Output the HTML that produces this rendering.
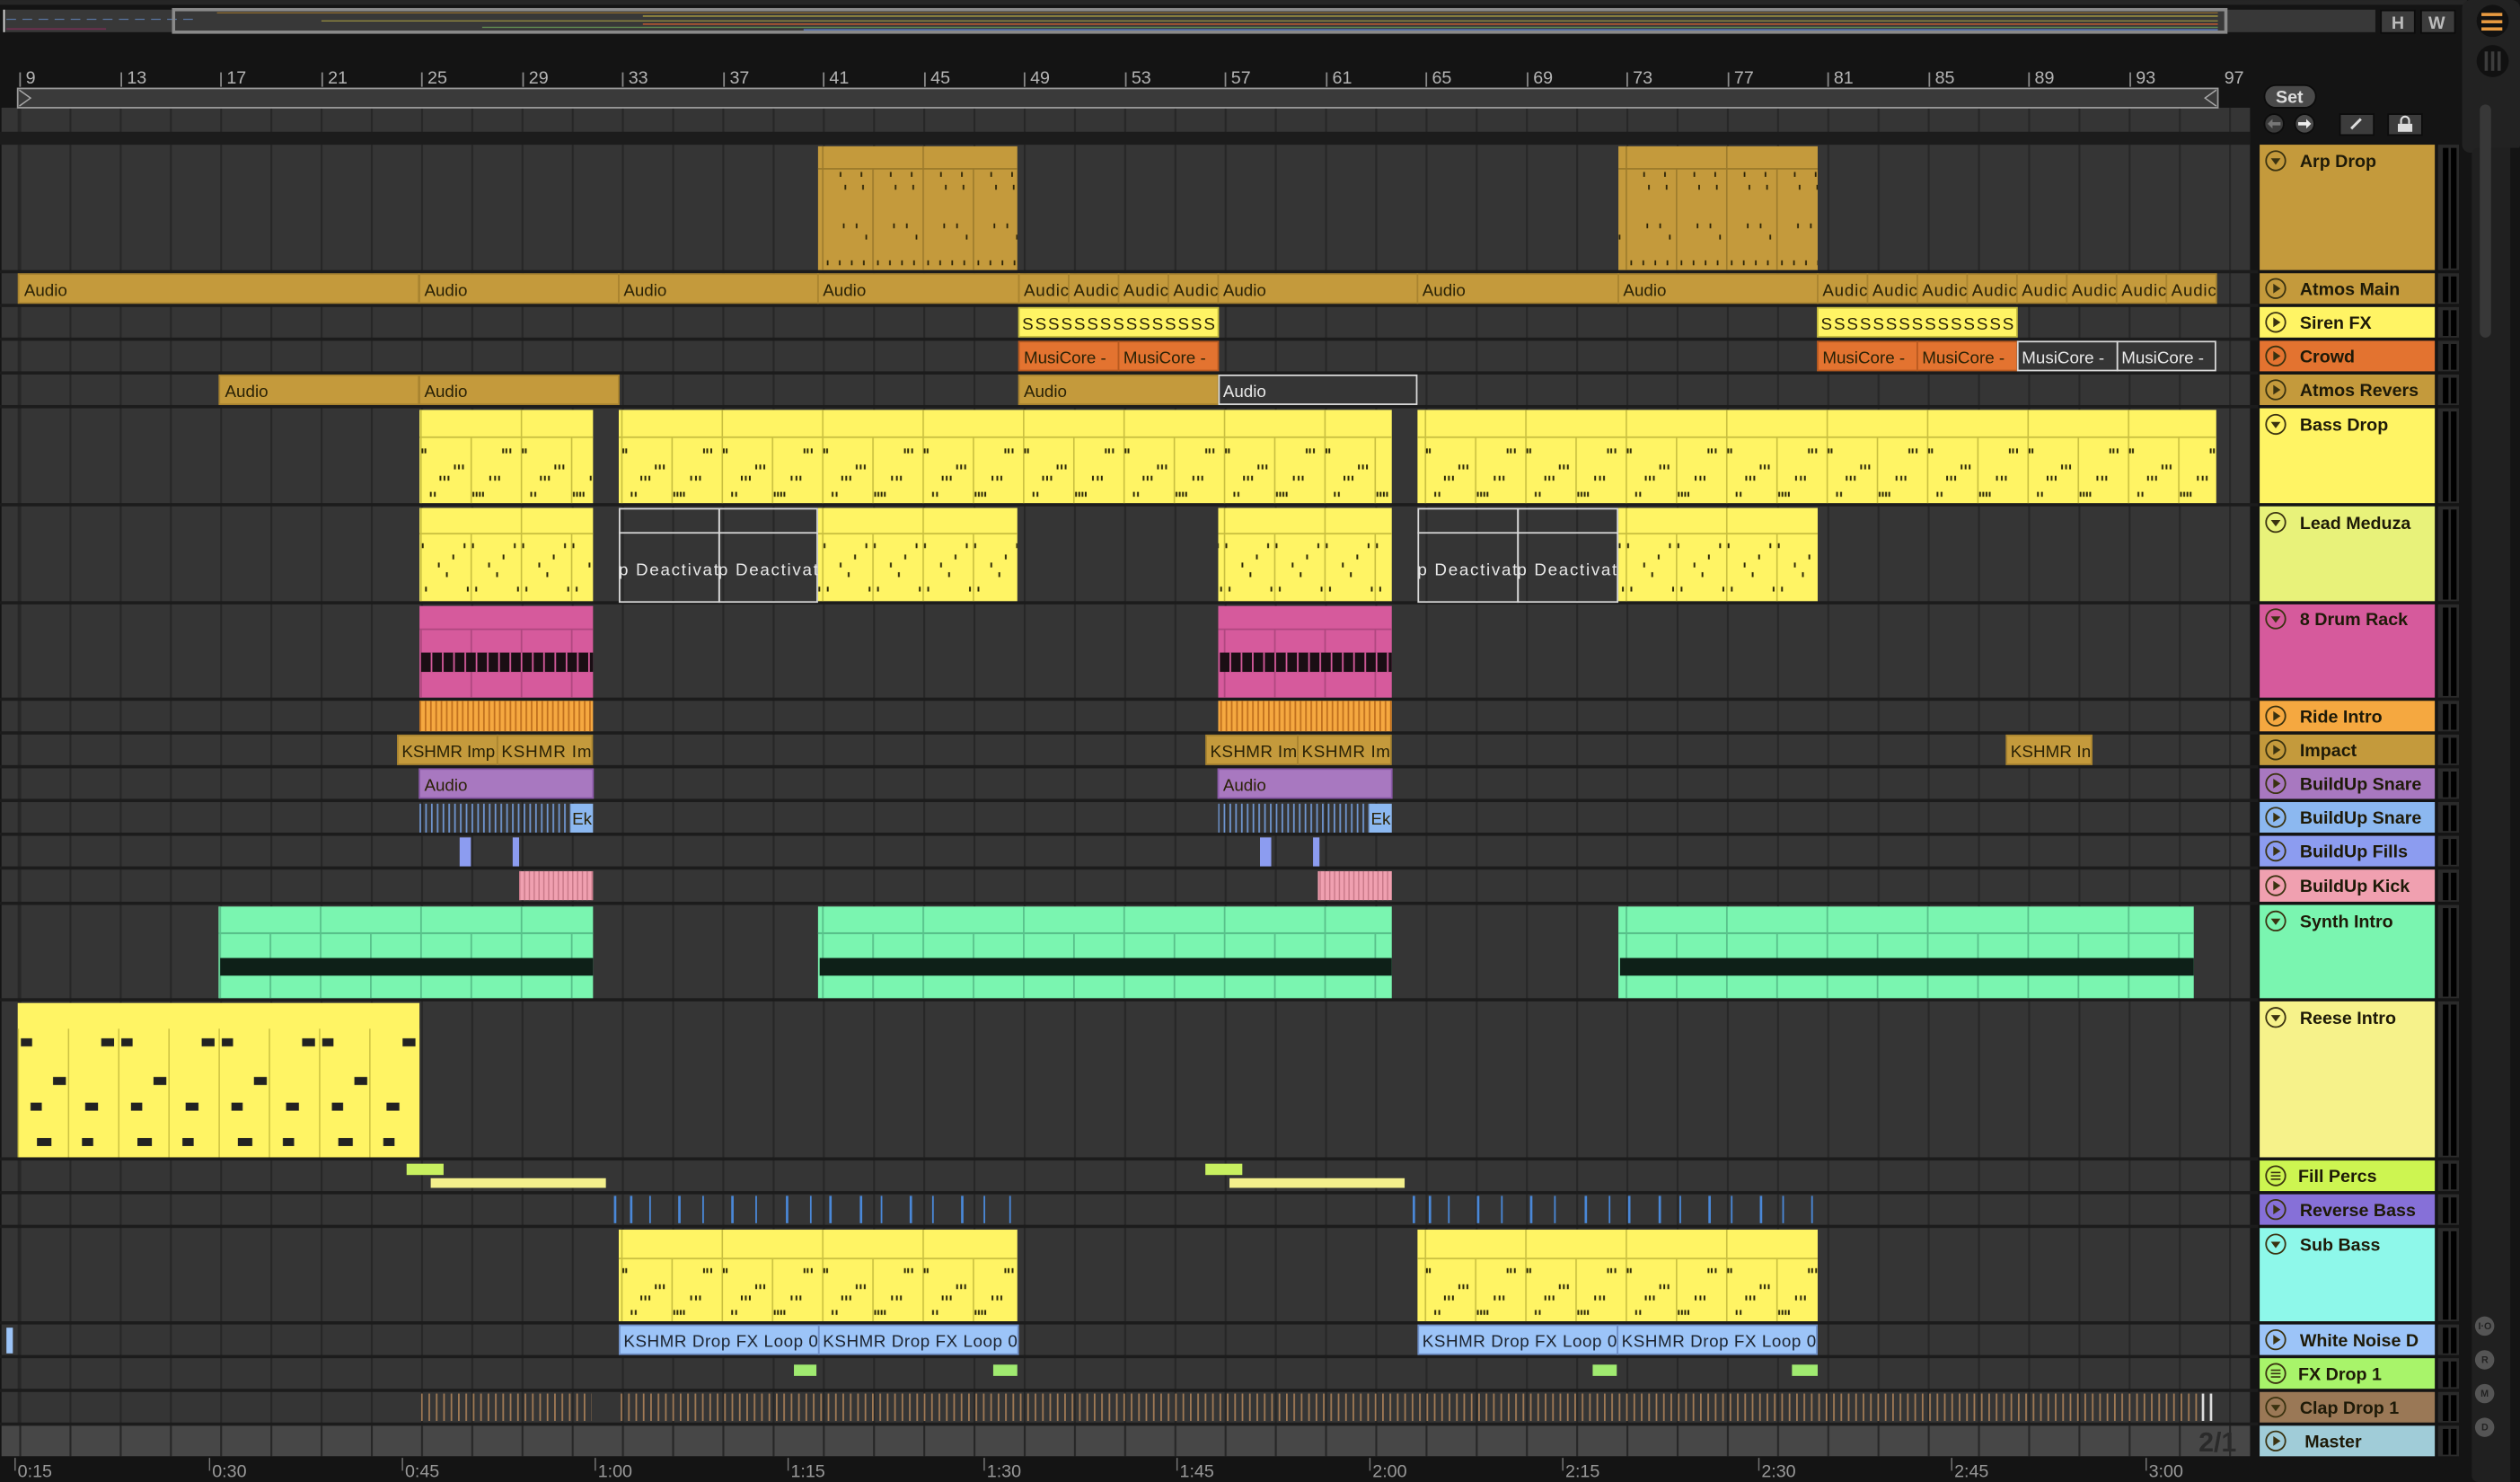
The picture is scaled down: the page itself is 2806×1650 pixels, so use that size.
<!DOCTYPE html>
<html><head><meta charset="utf-8"><style>
html,body{margin:0;padding:0;background:#141414;overflow:hidden}
svg{display:block}
text{font-family:"Liberation Sans",sans-serif}
.h{font-weight:bold;font-size:11px;fill:#1e1a08}
.c{font-size:10.5px;fill:#2a2206}
.r{font-size:10.5px;fill:#b4b4b4}
.w{font-size:10.5px;fill:#e8e8e8}
</style></head><body>
<svg width="2806" height="1650" viewBox="0 0 1568 922" xmlns="http://www.w3.org/2000/svg">
<defs>
<pattern id="grid" patternUnits="userSpaceOnUse" x="12" y="0" width="31.25" height="20"><rect width="1.2" height="20" fill="#272727"/></pattern>
<pattern id="nb" patternUnits="userSpaceOnUse" x="11.5" y="272" width="62.5" height="41">
<rect x="0" width="0.9" height="41" fill="#c9bf40"/><rect x="31.25" width="0.9" height="41" fill="#c9bf40"/>
<g fill="#2a2606">
<rect x="0.8" y="7" width="1.1" height="3"/><rect x="2.6" y="7" width="1.1" height="3"/>
<rect x="51" y="7" width="1.1" height="3"/><rect x="53" y="7" width="1.1" height="3"/><rect x="55.5" y="7" width="1.1" height="3"/>
<rect x="21" y="17" width="1.1" height="3"/><rect x="23.5" y="17" width="1.1" height="3"/><rect x="26" y="17" width="1.1" height="3"/>
<rect x="12" y="24" width="1.1" height="3"/><rect x="14.5" y="24" width="1.1" height="3"/><rect x="17" y="24" width="1.1" height="3"/>
<rect x="43" y="24" width="1.1" height="3"/><rect x="46" y="24" width="1.1" height="3"/><rect x="48.5" y="24" width="1.1" height="3"/>
<rect x="6" y="34" width="1.1" height="3"/><rect x="8.5" y="34" width="1.1" height="3"/>
<rect x="32.5" y="34" width="1.1" height="3"/><rect x="34.5" y="34" width="1.1" height="3"/><rect x="36.5" y="34" width="1.1" height="3"/><rect x="38.5" y="34" width="1.1" height="3"/>
</g></pattern>
<pattern id="ns" patternUnits="userSpaceOnUse" x="11.5" y="783" width="62.5" height="39">
<rect x="0" width="0.9" height="39" fill="#c9bf40"/><rect x="31.25" width="0.9" height="39" fill="#c9bf40"/>
<g fill="#2a2606">
<rect x="0.8" y="6" width="1.1" height="3"/><rect x="2.6" y="6" width="1.1" height="3"/>
<rect x="51" y="6" width="1.1" height="3"/><rect x="53" y="6" width="1.1" height="3"/><rect x="55.5" y="6" width="1.1" height="3"/>
<rect x="21" y="16" width="1.1" height="3"/><rect x="23.5" y="16" width="1.1" height="3"/><rect x="26" y="16" width="1.1" height="3"/>
<rect x="12" y="23" width="1.1" height="3"/><rect x="14.5" y="23" width="1.1" height="3"/><rect x="17" y="23" width="1.1" height="3"/>
<rect x="43" y="23" width="1.1" height="3"/><rect x="46" y="23" width="1.1" height="3"/><rect x="48.5" y="23" width="1.1" height="3"/>
<rect x="6" y="32" width="1.1" height="3"/><rect x="8.5" y="32" width="1.1" height="3"/>
<rect x="32.5" y="32" width="1.1" height="3"/><rect x="34.5" y="32" width="1.1" height="3"/><rect x="36.5" y="32" width="1.1" height="3"/><rect x="38.5" y="32" width="1.1" height="3"/>
</g></pattern>
<pattern id="nl" patternUnits="userSpaceOnUse" x="11.5" y="332" width="31.25" height="42">
<rect x="0" width="0.9" height="42" fill="#c9bf40"/>
<g fill="#2a2606"><rect x="1" y="6" width="1.1" height="3"/><rect x="11" y="18" width="1.1" height="3"/><rect x="3" y="33" width="1.1" height="3"/><rect x="16" y="24" width="1.1" height="3"/><rect x="27" y="6" width="1.1" height="3"/><rect x="29" y="33" width="1.1" height="3"/><rect x="20" y="13" width="1.1" height="3"/></g></pattern>
<pattern id="na" patternUnits="userSpaceOnUse" x="11.5" y="105" width="31.25" height="63">
<rect x="0" width="0.9" height="63" fill="#9c7a2c"/>
<g fill="#2a2206"><rect x="11" y="2" width="1" height="3"/><rect x="24" y="2" width="1" height="3"/><rect x="14" y="10" width="1" height="3"/>
<rect x="25" y="10" width="1" height="3"/><rect x="13" y="34" width="1" height="3"/><rect x="21" y="34" width="1" height="3"/><rect x="27" y="41" width="1" height="3"/>
<rect x="3" y="57" width="1" height="3"/><rect x="10.5" y="57" width="1" height="3"/><rect x="18" y="57" width="1" height="3"/><rect x="25.5" y="57" width="1" height="3"/></g></pattern>
<pattern id="nr" patternUnits="userSpaceOnUse" x="11" y="640" width="62.5" height="80">
<rect x="0" width="0.8" height="80" fill="#c9bf40"/><rect x="31.25" width="0.8" height="80" fill="#c9bf40"/>
<rect x="2" y="6" width="7" height="5" fill="#222"/><rect x="52" y="6" width="8" height="5" fill="#222"/>
<rect x="22" y="30" width="8" height="5" fill="#222"/><rect x="42" y="46" width="8" height="5" fill="#222"/>
<rect x="8" y="46" width="7" height="5" fill="#222"/><rect x="12" y="68" width="9" height="5" fill="#222"/><rect x="40" y="68" width="7" height="5" fill="#222"/></pattern>
<pattern id="hdY" patternUnits="userSpaceOnUse" x="11.5" y="0" width="62.5" height="10"><rect width="0.9" height="10" fill="#c9bf40"/></pattern>
<pattern id="hdA" patternUnits="userSpaceOnUse" x="11.5" y="0" width="62.5" height="10"><rect width="0.9" height="10" fill="#9c7a2c"/></pattern>
<pattern id="hdG" patternUnits="userSpaceOnUse" x="11.5" y="0" width="62.5" height="10"><rect width="1" height="10" fill="#58c08a"/></pattern>
<pattern id="cG" patternUnits="userSpaceOnUse" x="11.5" y="0" width="31.25" height="10"><rect width="1" height="10" fill="#58c08a"/></pattern>
<pattern id="ride" patternUnits="userSpaceOnUse" x="261" y="0" width="3.3" height="10"><rect width="1" height="10" fill="#c0701e"/></pattern>
<pattern id="clap" patternUnits="userSpaceOnUse" x="262" y="0" width="4.6" height="10"><rect width="1" height="10" fill="#a07a55"/></pattern>
<pattern id="snb" patternUnits="userSpaceOnUse" x="261" y="0" width="3.6" height="10"><rect width="1" height="10" fill="#6f95cf"/></pattern>
<pattern id="kick" patternUnits="userSpaceOnUse" x="323" y="0" width="3" height="10"><rect width="0.8" height="10" fill="#c87888"/></pattern>
<pattern id="drum" patternUnits="userSpaceOnUse" x="261" y="0" width="7" height="10"><rect width="1" height="10" fill="#d65a9c"/></pattern>
<pattern id="cP" patternUnits="userSpaceOnUse" x="11.5" y="0" width="31.25" height="10"><rect width="1" height="10" fill="#b04880"/></pattern>
</defs>

<!-- top bar -->
<rect x="0" y="0" width="1568" height="922" fill="#141414"/>
<rect x="0" y="0" width="1535" height="3" fill="#262626"/>
<rect x="2" y="6" width="1476" height="14" fill="#383838"/>
<rect x="2" y="6" width="1" height="14" fill="#ddd"/>
<line x1="4" y1="12" x2="120" y2="12" stroke="#5874a0" stroke-width="0.7" stroke-dasharray="6 4"/>
<line x1="4" y1="18" x2="66" y2="18" stroke="#703050" stroke-width="1"/>
<rect x="108" y="6" width="1277" height="14" fill="none" stroke="#8a8a8a" stroke-width="2"/>
<line x1="135" y1="8" x2="1380" y2="8" stroke="#8a6a30" stroke-width="0.8"/>
<line x1="400" y1="10" x2="1380" y2="10" stroke="#b0a040" stroke-width="0.8"/>
<line x1="200" y1="13" x2="1380" y2="13" stroke="#9a9040" stroke-width="0.7"/>
<line x1="400" y1="15" x2="1380" y2="15" stroke="#c05a30" stroke-width="0.8"/>
<line x1="300" y1="17" x2="1380" y2="17" stroke="#5f8a50" stroke-width="0.8"/>
<line x1="500" y1="18.5" x2="1380" y2="18.5" stroke="#5c7cc0" stroke-width="0.8"/>
<rect x="1481" y="6" width="22" height="15" fill="#0c0c0c"/><rect x="1482" y="7" width="20" height="13" fill="#3c3c3c"/>
<text x="1488" y="18" style="font-size:11px;fill:#bbb;font-weight:bold">H</text>
<rect x="1506" y="6" width="22" height="15" fill="#0c0c0c"/><rect x="1507" y="7" width="20" height="13" fill="#3c3c3c"/>
<text x="1511" y="18" style="font-size:11px;fill:#bbb;font-weight:bold">W</text>
<!-- right column -->
<rect x="1532" y="0" width="36" height="95" rx="5" fill="#222"/>
<rect x="1538" y="92" width="28" height="830" rx="4" fill="#202020"/>
<rect x="1562" y="92" width="6" height="830" fill="#141414"/>
<circle cx="1551" cy="13" r="10" fill="#111"/>
<rect x="1544" y="8" width="13" height="2" fill="#e89a40"/><rect x="1544" y="12.5" width="13" height="2" fill="#e89a40"/><rect x="1544" y="17" width="13" height="2" fill="#e89a40"/>
<circle cx="1551" cy="38" r="10" fill="#111"/>
<rect x="1546" y="32" width="2" height="12" fill="#3c3c3c"/><rect x="1550" y="32" width="2" height="12" fill="#3c3c3c"/><rect x="1554" y="32" width="2" height="12" fill="#3c3c3c"/>
<rect x="1543" y="65" width="7" height="145" rx="3.5" fill="#383838"/>
<g style="font-size:6px;fill:#222;font-weight:bold">
<circle cx="1546" cy="825" r="6" fill="#555"/><text x="1542" y="827">I·O</text>
<circle cx="1546" cy="846" r="6" fill="#555"/><text x="1544" y="848">R</text>
<circle cx="1546" cy="867" r="6" fill="#555"/><text x="1543.5" y="869">M</text>
<circle cx="1546" cy="888" r="6" fill="#555"/><text x="1544" y="890">D</text>
</g>

<!-- ruler -->
<g class="r" style="font-size:11px">
<text x="16" y="52">9</text><text x="79" y="52">13</text><text x="141" y="52">17</text><text x="204" y="52">21</text><text x="266" y="52">25</text><text x="329" y="52">29</text><text x="391" y="52">33</text><text x="454" y="52">37</text><text x="516" y="52">41</text><text x="579" y="52">45</text><text x="641" y="52">49</text><text x="704" y="52">53</text><text x="766" y="52">57</text><text x="829" y="52">61</text><text x="891" y="52">65</text><text x="954" y="52">69</text><text x="1016" y="52">73</text><text x="1079" y="52">77</text><text x="1141" y="52">81</text><text x="1204" y="52">85</text><text x="1266" y="52">89</text><text x="1329" y="52">93</text><text x="1384" y="52">97</text>
</g>
<g fill="#888">
<rect x="12" y="45" width="1" height="9"/><rect x="75" y="45" width="1" height="9"/><rect x="137" y="45" width="1" height="9"/><rect x="200" y="45" width="1" height="9"/><rect x="262" y="45" width="1" height="9"/><rect x="325" y="45" width="1" height="9"/><rect x="387" y="45" width="1" height="9"/><rect x="450" y="45" width="1" height="9"/><rect x="512" y="45" width="1" height="9"/><rect x="575" y="45" width="1" height="9"/><rect x="637" y="45" width="1" height="9"/><rect x="700" y="45" width="1" height="9"/><rect x="762" y="45" width="1" height="9"/><rect x="825" y="45" width="1" height="9"/><rect x="887" y="45" width="1" height="9"/><rect x="950" y="45" width="1" height="9"/><rect x="1012" y="45" width="1" height="9"/><rect x="1075" y="45" width="1" height="9"/><rect x="1137" y="45" width="1" height="9"/><rect x="1200" y="45" width="1" height="9"/><rect x="1262" y="45" width="1" height="9"/><rect x="1325" y="45" width="1" height="9"/>
</g>
<!-- Set controls -->
<rect x="1409" y="53" width="32" height="14" rx="7" fill="#4a4a4a" stroke="#0c0c0c"/>
<text x="1416" y="64" style="font-size:11px;fill:#ddd;font-weight:bold">Set</text>
<circle cx="1415" cy="77" r="6" fill="#3a3a3a" stroke="#0c0c0c"/><path d="M1411,77 L1414,74 L1414,76 L1419,76 L1419,78 L1414,78 L1414,80Z" fill="#777"/>
<circle cx="1434" cy="77" r="6" fill="#4a4a4a" stroke="#0c0c0c"/><path d="M1438,77 L1435,74 L1435,76 L1430,76 L1430,78 L1435,78 L1435,80Z" fill="#eee"/>
<rect x="1456" y="71" width="21" height="13" fill="#3c3c3c" stroke="#0c0c0c"/><line x1="1463" y1="80" x2="1469" y2="74" stroke="#ddd" stroke-width="1.6"/>
<rect x="1486" y="71" width="21" height="13" fill="#3c3c3c" stroke="#0c0c0c"/><rect x="1492" y="77" width="9" height="5" fill="#ddd"/><path d="M1494,77 V75 a2.5,2.5 0 0 1 5,0 V77" fill="none" stroke="#ddd" stroke-width="1.2"/>

<!-- arrangement background -->
<rect x="1" y="67" width="1399" height="839" fill="#353535"/>
<rect x="1" y="67" width="1399" height="839" fill="url(#grid)"/>
<rect x="1" y="67" width="10" height="839" fill="#353535"/>
<rect x="11" y="67" width="1" height="839" fill="#272727"/>
<rect x="11" y="55" width="1369" height="12" fill="#3a3a3a" stroke="#9a9a9a" stroke-width="1"/>
<path d="M12,56 L19,61 L12,66" fill="none" stroke="#aaa" stroke-width="0.8"/>
<path d="M1379,56 L1372,61 L1379,66" fill="none" stroke="#aaa" stroke-width="0.8"/>
<rect x="0" y="82" width="1400" height="8" fill="#1c1c1c"/>
<rect x="1" y="887" width="1399" height="19" fill="#474747"/>
<rect x="1" y="887" width="1399" height="19" fill="url(#grid)"/>
<g fill="#1c1c1c">
<rect x="0" y="168" width="1405" height="2"/><rect x="0" y="189" width="1405" height="2"/><rect x="0" y="210" width="1405" height="2"/><rect x="0" y="231" width="1405" height="2"/><rect x="0" y="252" width="1405" height="2"/><rect x="0" y="313" width="1405" height="2"/><rect x="0" y="374" width="1405" height="2"/><rect x="0" y="434" width="1405" height="2"/><rect x="0" y="455" width="1405" height="2"/><rect x="0" y="476" width="1405" height="2"/><rect x="0" y="497" width="1405" height="2"/><rect x="0" y="518" width="1405" height="2"/><rect x="0" y="539" width="1405" height="2"/><rect x="0" y="561" width="1405" height="2"/><rect x="0" y="621" width="1405" height="2"/><rect x="0" y="720" width="1405" height="2"/><rect x="0" y="741" width="1405" height="2"/><rect x="0" y="762" width="1405" height="2"/><rect x="0" y="822" width="1405" height="2"/><rect x="0" y="843" width="1405" height="2"/><rect x="0" y="864" width="1405" height="2"/><rect x="0" y="885" width="1405" height="2"/>
</g>
<text x="1368" y="903" style="font-size:17px;fill:#2a2a2a;font-weight:bold">2/1</text>

<!-- Arp Drop -->
<rect x="509" y="91" width="124" height="77" fill="#c49a3c"/><rect x="509" y="91" width="124" height="14" fill="url(#hdA)"/><rect x="509" y="105" width="124" height="63" fill="url(#na)"/><rect x="509" y="104.5" width="124" height="1" fill="#9c7a2c"/>
<rect x="1007" y="91" width="124" height="77" fill="#c49a3c"/><rect x="1007" y="91" width="124" height="14" fill="url(#hdA)"/><rect x="1007" y="105" width="124" height="63" fill="url(#na)"/><rect x="1007" y="104.5" width="124" height="1" fill="#9c7a2c"/>
<!-- Atmos Main -->
<g stroke="#a98430" stroke-width="1" fill="#c49a3c">
<rect x="11.5" y="170.5" width="249" height="18"/><rect x="261" y="170.5" width="124" height="18"/><rect x="385" y="170.5" width="124" height="18"/><rect x="509" y="170.5" width="125" height="18"/>
<rect x="634" y="170.5" width="31" height="18"/><rect x="665" y="170.5" width="31" height="18"/><rect x="696" y="170.5" width="31" height="18"/><rect x="727" y="170.5" width="31" height="18"/>
<rect x="758" y="170.5" width="124" height="18"/><rect x="882" y="170.5" width="125" height="18"/><rect x="1007" y="170.5" width="124" height="18"/>
<rect x="1131" y="170.5" width="31" height="18"/><rect x="1162" y="170.5" width="31" height="18"/><rect x="1193" y="170.5" width="31" height="18"/><rect x="1224" y="170.5" width="31" height="18"/><rect x="1255" y="170.5" width="31" height="18"/><rect x="1286" y="170.5" width="31" height="18"/><rect x="1317" y="170.5" width="31" height="18"/><rect x="1348" y="170.5" width="31" height="18"/>
</g>
<g class="c">
<text x="15" y="184">Audio</text><text x="264" y="184">Audio</text><text x="388" y="184">Audio</text><text x="512" y="184">Audio</text>
<text x="637" y="184" textLength="28">Audic</text><text x="668" y="184" textLength="28">Audic</text><text x="699" y="184" textLength="28">Audic</text><text x="730" y="184" textLength="28">Audic</text>
<text x="761" y="184">Audio</text><text x="885" y="184">Audio</text><text x="1010" y="184">Audio</text>
<text x="1134" y="184" textLength="28">Audic</text><text x="1165" y="184" textLength="28">Audic</text><text x="1196" y="184" textLength="28">Audic</text><text x="1227" y="184" textLength="28">Audic</text><text x="1258" y="184" textLength="28">Audic</text><text x="1289" y="184" textLength="28">Audic</text><text x="1320" y="184" textLength="28">Audic</text><text x="1351" y="184" textLength="28">Audic</text>
</g>
<!-- Siren FX -->
<rect x="634" y="191.5" width="124" height="18" fill="#fff464" stroke="#c9bf40"/>
<rect x="1131" y="191.5" width="124" height="18" fill="#fff464" stroke="#c9bf40"/>
<text x="636" y="205" class="c" textLength="120">SSSSSSSSSSSSSSS</text>
<text x="1133" y="205" class="c" textLength="120">SSSSSSSSSSSSSSS</text>
<!-- Crowd -->
<g fill="#e37330" stroke="#b85a20"><rect x="634" y="212.5" width="62" height="18"/><rect x="696" y="212.5" width="62" height="18"/><rect x="1131" y="212.5" width="62" height="18"/><rect x="1193" y="212.5" width="62" height="18"/></g>
<g fill="#353535" stroke="#d8d8d8"><rect x="1255.5" y="212.5" width="62" height="18"/><rect x="1317.5" y="212.5" width="61" height="18"/></g>
<g class="c"><text x="637" y="226">MusiCore -</text><text x="699" y="226">MusiCore -</text><text x="1134" y="226">MusiCore -</text><text x="1196" y="226">MusiCore -</text></g>
<g class="w"><text x="1258" y="226">MusiCore -</text><text x="1320" y="226">MusiCore -</text></g>
<!-- Atmos Revers -->
<g fill="#c49a3c" stroke="#a98430"><rect x="136.5" y="233.5" width="124" height="18"/><rect x="261" y="233.5" width="124" height="18"/><rect x="634" y="233.5" width="124" height="18"/></g>
<rect x="758.5" y="233.5" width="123" height="18" fill="#353535" stroke="#d8d8d8"/>
<g class="c"><text x="140" y="247">Audio</text><text x="264" y="247">Audio</text><text x="637" y="247">Audio</text></g>
<text x="761" y="247" class="w">Audio</text>
<!-- Bass Drop -->
<g fill="#fff464">
<rect x="261" y="255" width="108" height="58"/><rect x="385" y="255" width="481" height="58"/><rect x="882" y="255" width="497" height="58"/></g>
<rect x="261" y="255" width="108" height="17" fill="url(#hdY)"/><rect x="385" y="255" width="481" height="17" fill="url(#hdY)"/><rect x="882" y="255" width="497" height="17" fill="url(#hdY)"/>
<rect x="261" y="272" width="108" height="41" fill="url(#nb)"/><rect x="385" y="272" width="481" height="41" fill="url(#nb)"/><rect x="882" y="272" width="497" height="41" fill="url(#nb)"/>
<g fill="#c9bf40"><rect x="261" y="271.5" width="108" height="1"/><rect x="385" y="271.5" width="481" height="1"/><rect x="882" y="271.5" width="497" height="1"/></g>
<!-- Lead Meduza -->
<g fill="#fff464"><rect x="261" y="316" width="108" height="58"/><rect x="509" y="316" width="124" height="58"/><rect x="758" y="316" width="108" height="58"/><rect x="1007" y="316" width="124" height="58"/></g>
<rect x="261" y="316" width="108" height="16" fill="url(#hdY)"/><rect x="509" y="316" width="124" height="16" fill="url(#hdY)"/><rect x="758" y="316" width="108" height="16" fill="url(#hdY)"/><rect x="1007" y="316" width="124" height="16" fill="url(#hdY)"/>
<rect x="261" y="332" width="108" height="42" fill="url(#nl)"/><rect x="509" y="332" width="124" height="42" fill="url(#nl)"/><rect x="758" y="332" width="108" height="42" fill="url(#nl)"/><rect x="1007" y="332" width="124" height="42" fill="url(#nl)"/>
<g fill="#c9bf40"><rect x="261" y="331.5" width="108" height="1"/><rect x="509" y="331.5" width="124" height="1"/><rect x="758" y="331.5" width="108" height="1"/><rect x="1007" y="331.5" width="124" height="1"/></g>
<g fill="none" stroke="#d8d8d8"><rect x="385.5" y="316.5" width="62" height="58"/><rect x="447.5" y="316.5" width="61" height="58"/><line x1="385" y1="331.5" x2="509" y2="331.5"/>
<rect x="882.5" y="316.5" width="62" height="58"/><rect x="944.5" y="316.5" width="62" height="58"/><line x1="882" y1="331.5" x2="1007" y2="331.5"/></g>
<g class="w"><text x="385" y="358" textLength="62">p Deactivat</text><text x="447" y="358" textLength="62">p Deactivat</text><text x="882" y="358" textLength="62">p Deactivat</text><text x="944" y="358" textLength="62">p Deactivat</text></g>
<!-- 8 Drum Rack -->
<rect x="261" y="377" width="108" height="57" fill="#d65a9c"/><rect x="758" y="377" width="108" height="57" fill="#d65a9c"/>
<rect x="261" y="392" width="108" height="42" fill="url(#cP)"/><rect x="758" y="392" width="108" height="42" fill="url(#cP)"/>
<rect x="262" y="406" width="107" height="12" fill="#1a0e14"/><rect x="262" y="406" width="107" height="12" fill="url(#drum)"/>
<rect x="759" y="406" width="107" height="12" fill="#1a0e14"/><rect x="759" y="406" width="107" height="12" fill="url(#drum)"/>
<g fill="#b04880"><rect x="261" y="391" width="108" height="1"/><rect x="758" y="391" width="108" height="1"/></g>
<!-- Ride Intro -->
<rect x="261" y="436" width="108" height="19" fill="#f5a840"/><rect x="261" y="436" width="108" height="19" fill="url(#ride)"/>
<rect x="758" y="436" width="108" height="19" fill="#f5a840"/><rect x="758" y="436" width="108" height="19" fill="url(#ride)"/>
<!-- Impact -->
<g fill="#c49a3c" stroke="#a98430"><rect x="247.5" y="457.5" width="62" height="18"/><rect x="309.5" y="457.5" width="59" height="18"/><rect x="750.5" y="457.5" width="57" height="18"/><rect x="807.5" y="457.5" width="58" height="18"/><rect x="1248.5" y="457.5" width="53" height="18"/></g>
<g class="c"><text x="250" y="471" textLength="58">KSHMR Imp</text><text x="312" y="471" textLength="56">KSHMR Im</text><text x="753" y="471" textLength="54">KSHMR Im</text><text x="810" y="471" textLength="55">KSHMR Im</text><text x="1251" y="471" textLength="50">KSHMR In</text></g>
<!-- BuildUp Snare -->
<rect x="261" y="478.5" width="108" height="18" fill="#a878c0" stroke="#8a5aa8"/><rect x="758" y="478.5" width="108" height="18" fill="#a878c0" stroke="#8a5aa8"/>
<g class="c"><text x="264" y="492">Audio</text><text x="761" y="492">Audio</text></g>
<!-- BuildUp Snare 2 -->
<rect x="261" y="500" width="94" height="18" fill="url(#snb)"/><rect x="355" y="500" width="14" height="18" fill="#8cb8f0"/>
<rect x="758" y="500" width="94" height="18" fill="url(#snb)"/><rect x="852" y="500" width="14" height="18" fill="#8cb8f0"/>
<g class="c"><text x="356" y="513">Ek</text><text x="853" y="513">Ek</text></g>
<!-- BuildUp Fills -->
<g fill="#8c9cf0"><rect x="286" y="521" width="7" height="18"/><rect x="319" y="521" width="4" height="18"/><rect x="784" y="521" width="7" height="18"/><rect x="817" y="521" width="4" height="18"/></g>
<!-- BuildUp Kick -->
<rect x="323" y="542" width="46" height="18" fill="#f0a0b0"/><rect x="323" y="542" width="46" height="18" fill="url(#kick)"/>
<rect x="820" y="542" width="46" height="18" fill="#f0a0b0"/><rect x="820" y="542" width="46" height="18" fill="url(#kick)"/>
<!-- Synth Intro -->
<g fill="#7af5b0"><rect x="136" y="564" width="233" height="57"/><rect x="509" y="564" width="357" height="57"/><rect x="1007" y="564" width="358" height="57"/></g>
<rect x="136" y="564" width="233" height="16" fill="url(#hdG)"/><rect x="509" y="564" width="357" height="16" fill="url(#hdG)"/><rect x="1007" y="564" width="358" height="16" fill="url(#hdG)"/>
<rect x="136" y="581" width="233" height="40" fill="url(#cG)"/><rect x="509" y="581" width="357" height="40" fill="url(#cG)"/><rect x="1007" y="581" width="358" height="40" fill="url(#cG)"/>
<g fill="#0e2018"><rect x="137" y="596" width="232" height="11"/><rect x="510" y="596" width="356" height="11"/><rect x="1008" y="596" width="357" height="11"/></g>
<g fill="#58c08a"><rect x="136" y="580" width="233" height="1.2"/><rect x="509" y="580" width="357" height="1.2"/><rect x="1007" y="580" width="358" height="1.2"/></g>
<!-- Reese Intro -->
<rect x="11" y="624" width="250" height="96" fill="#fff464"/><rect x="11" y="640" width="250" height="80" fill="url(#nr)"/>
<!-- Fill Percs -->
<g fill="#c8f060"><rect x="253" y="724" width="23" height="7"/><rect x="750" y="724" width="23" height="7"/></g>
<g fill="#f4f08c"><rect x="268" y="733" width="109" height="6"/><rect x="765" y="733" width="109" height="6"/></g>
<!-- Reverse Bass -->
<g fill="#4a88d8">
<rect x="382" y="744" width="1.5" height="17"/><rect x="392" y="744" width="1.5" height="17"/><rect x="404" y="744" width="1" height="17"/><rect x="422" y="744" width="1.5" height="17"/><rect x="437" y="744" width="1" height="17"/><rect x="455" y="744" width="1.5" height="17"/><rect x="470" y="744" width="1" height="17"/><rect x="489" y="744" width="1.5" height="17"/><rect x="504" y="744" width="1" height="17"/><rect x="516" y="744" width="1.5" height="17"/><rect x="535" y="744" width="1.5" height="17"/><rect x="548" y="744" width="1" height="17"/><rect x="566" y="744" width="1.5" height="17"/><rect x="580" y="744" width="1" height="17"/><rect x="598" y="744" width="1.5" height="17"/><rect x="612" y="744" width="1" height="17"/><rect x="628" y="744" width="1" height="17"/>
<rect x="879" y="744" width="1.5" height="17"/><rect x="889" y="744" width="1.5" height="17"/><rect x="901" y="744" width="1" height="17"/><rect x="919" y="744" width="1.5" height="17"/><rect x="934" y="744" width="1" height="17"/><rect x="952" y="744" width="1.5" height="17"/><rect x="967" y="744" width="1" height="17"/><rect x="986" y="744" width="1.5" height="17"/><rect x="1001" y="744" width="1" height="17"/><rect x="1013" y="744" width="1.5" height="17"/><rect x="1032" y="744" width="1.5" height="17"/><rect x="1045" y="744" width="1" height="17"/><rect x="1063" y="744" width="1.5" height="17"/><rect x="1077" y="744" width="1" height="17"/><rect x="1095" y="744" width="1.5" height="17"/><rect x="1109" y="744" width="1" height="17"/><rect x="1127" y="744" width="1" height="17"/>
</g>
<!-- Sub Bass -->
<rect x="385" y="765" width="248" height="57" fill="#fff464"/><rect x="882" y="765" width="249" height="57" fill="#fff464"/>
<rect x="385" y="765" width="248" height="18" fill="url(#hdY)"/><rect x="882" y="765" width="249" height="18" fill="url(#hdY)"/>
<rect x="385" y="783" width="248" height="39" fill="url(#ns)"/><rect x="882" y="783" width="249" height="39" fill="url(#ns)"/>
<g fill="#c9bf40"><rect x="385" y="782.5" width="248" height="1"/><rect x="882" y="782.5" width="249" height="1"/></g>
<!-- White Noise -->
<rect x="4" y="826" width="4" height="16" fill="#9cc4f8"/>
<g fill="#9cc4f8" stroke="#7090c8"><rect x="385.5" y="824.5" width="124" height="18"/><rect x="509.5" y="824.5" width="124" height="18"/><rect x="882.5" y="824.5" width="124" height="18"/><rect x="1006.5" y="824.5" width="124" height="18"/></g>
<g class="c" style="fill:#1c2430"><text x="388" y="838" textLength="121">KSHMR Drop FX Loop 0</text><text x="512" y="838" textLength="121">KSHMR Drop FX Loop 0</text><text x="885" y="838" textLength="121">KSHMR Drop FX Loop 0</text><text x="1009" y="838" textLength="121">KSHMR Drop FX Loop 0</text></g>
<!-- FX Drop -->
<g fill="#a0ea70"><rect x="494" y="849" width="14" height="7"/><rect x="618" y="849" width="15" height="7"/><rect x="991" y="849" width="15" height="7"/><rect x="1115" y="849" width="16" height="7"/></g>
<!-- Clap -->
<rect x="262" y="867" width="106" height="17" fill="url(#clap)"/><rect x="385" y="867" width="985" height="17" fill="url(#clap)"/>
<rect x="1370" y="867" width="1.5" height="17" fill="#ddd"/><rect x="1375" y="867" width="1.5" height="17" fill="#ddd"/>

<!-- bottom timeline -->
<rect x="0" y="906" width="1405" height="16" fill="#141414"/>
<g class="r" style="font-size:11px;fill:#999">
<text x="11" y="919">0:15</text><text x="132" y="919">0:30</text><text x="252" y="919">0:45</text><text x="372" y="919">1:00</text><text x="492" y="919">1:15</text><text x="614" y="919">1:30</text><text x="734" y="919">1:45</text><text x="854" y="919">2:00</text><text x="974" y="919">2:15</text><text x="1096" y="919">2:30</text><text x="1216" y="919">2:45</text><text x="1337" y="919">3:00</text>
</g>
<g fill="#777">
<rect x="9" y="907" width="0.8" height="8"/><rect x="130" y="907" width="0.8" height="8"/><rect x="250" y="907" width="0.8" height="8"/><rect x="370" y="907" width="0.8" height="8"/><rect x="490" y="907" width="0.8" height="8"/><rect x="612" y="907" width="0.8" height="8"/><rect x="732" y="907" width="0.8" height="8"/><rect x="852" y="907" width="0.8" height="8"/><rect x="972" y="907" width="0.8" height="8"/><rect x="1094" y="907" width="0.8" height="8"/><rect x="1214" y="907" width="0.8" height="8"/><rect x="1335" y="907" width="0.8" height="8"/>
</g>

<!-- headers -->
<g>
<rect x="1406" y="90" width="109" height="78" fill="#c49a3c"/>
<rect x="1406" y="170" width="109" height="19" fill="#c49a3c"/>
<rect x="1406" y="191" width="109" height="19" fill="#fff464"/>
<rect x="1406" y="212" width="109" height="19" fill="#e37330"/>
<rect x="1406" y="233" width="109" height="19" fill="#c49a3c"/>
<rect x="1406" y="254" width="109" height="59" fill="#fff464"/>
<rect x="1406" y="315" width="109" height="59" fill="#e8f27a"/>
<rect x="1406" y="376" width="109" height="58" fill="#d65a9c"/>
<rect x="1406" y="436" width="109" height="19" fill="#f5a840"/>
<rect x="1406" y="457" width="109" height="19" fill="#c49a3c"/>
<rect x="1406" y="478" width="109" height="19" fill="#a878c0"/>
<rect x="1406" y="499" width="109" height="19" fill="#8cb8f0"/>
<rect x="1406" y="520" width="109" height="19" fill="#8c9cf0"/>
<rect x="1406" y="541" width="109" height="20" fill="#f0a0b0"/>
<rect x="1406" y="563" width="109" height="58" fill="#7af5b0"/>
<rect x="1406" y="623" width="109" height="97" fill="#f6f28a"/>
<rect x="1406" y="722" width="109" height="19" fill="#cdf551"/>
<rect x="1406" y="743" width="109" height="19" fill="#8670d8"/>
<rect x="1406" y="764" width="109" height="58" fill="#8ef8ea"/>
<rect x="1406" y="824" width="109" height="19" fill="#9cc4f8"/>
<rect x="1406" y="845" width="109" height="19" fill="#a8f46a"/>
<rect x="1406" y="866" width="109" height="19" fill="#9a7856"/>
<rect x="1406" y="887" width="109" height="19" fill="#a0ccd8"/>
</g>
<g fill="none" stroke="#3a3210" stroke-width="1">
<circle cx="1416" cy="100" r="6"/><circle cx="1416" cy="179.5" r="6"/><circle cx="1416" cy="200.5" r="6"/><circle cx="1416" cy="221.5" r="6"/><circle cx="1416" cy="242.5" r="6"/><circle cx="1416" cy="264" r="6"/><circle cx="1416" cy="325" r="6"/><circle cx="1416" cy="385" r="6"/><circle cx="1416" cy="445.5" r="6"/><circle cx="1416" cy="466.5" r="6"/><circle cx="1416" cy="487.5" r="6"/><circle cx="1416" cy="508.5" r="6"/><circle cx="1416" cy="529.5" r="6"/><circle cx="1416" cy="551" r="6"/><circle cx="1416" cy="573" r="6"/><circle cx="1416" cy="633" r="6"/><circle cx="1416" cy="731.5" r="6"/><circle cx="1416" cy="752.5" r="6"/><circle cx="1416" cy="774" r="6"/><circle cx="1416" cy="833.5" r="6"/><circle cx="1416" cy="854.5" r="6"/><circle cx="1416" cy="875.5" r="6"/><circle cx="1416" cy="896.5" r="6"/>
</g>
<g fill="#3a3210">
<path d="M1413,98.5h6l-3,4z"/><path d="M1413,262.5h6l-3,4z"/><path d="M1413,323.5h6l-3,4z"/><path d="M1413,383.5h6l-3,4z"/><path d="M1413,571.5h6l-3,4z"/><path d="M1413,631.5h6l-3,4z"/><path d="M1413,772.5h6l-3,4z"/><path d="M1413,874h6l-3,4z"/>
<path d="M1414.5,176.5v6l4.5,-3z"/><path d="M1414.5,197.5v6l4.5,-3z"/><path d="M1414.5,218.5v6l4.5,-3z"/><path d="M1414.5,239.5v6l4.5,-3z"/><path d="M1414.5,442.5v6l4.5,-3z"/><path d="M1414.5,463.5v6l4.5,-3z"/><path d="M1414.5,484.5v6l4.5,-3z"/><path d="M1414.5,505.5v6l4.5,-3z"/><path d="M1414.5,526.5v6l4.5,-3z"/><path d="M1414.5,548v6l4.5,-3z"/><path d="M1414.5,749.5v6l4.5,-3z"/><path d="M1414.5,830.5v6l4.5,-3z"/><path d="M1414.5,893.5v6l4.5,-3z"/>
<rect x="1413" y="729" width="6" height="0.9"/><rect x="1413" y="731.1" width="6" height="0.9"/><rect x="1413" y="733.2" width="6" height="0.9"/>
<rect x="1413" y="852" width="6" height="0.9"/><rect x="1413" y="854.1" width="6" height="0.9"/><rect x="1413" y="856.2" width="6" height="0.9"/>
</g>
<g class="h">
<text x="1431" y="104">Arp Drop</text><text x="1431" y="183.5">Atmos Main</text><text x="1431" y="204.5">Siren FX</text><text x="1431" y="225.5">Crowd</text><text x="1431" y="246.5">Atmos Revers</text><text x="1431" y="268">Bass Drop</text><text x="1431" y="329">Lead Meduza</text><text x="1431" y="389">8 Drum Rack</text><text x="1431" y="449.5">Ride Intro</text><text x="1431" y="470.5">Impact</text><text x="1431" y="491.5">BuildUp Snare</text><text x="1431" y="512.5">BuildUp Snare</text><text x="1431" y="533.5">BuildUp Fills</text><text x="1431" y="555">BuildUp Kick</text><text x="1431" y="577">Synth Intro</text><text x="1431" y="637">Reese Intro</text><text x="1430" y="735.5">Fill Percs</text><text x="1431" y="756.5">Reverse Bass</text><text x="1431" y="778">Sub Bass</text><text x="1431" y="837.5">White Noise D</text><text x="1430" y="858.5">FX Drop 1</text><text x="1431" y="879.5">Clap Drop 1</text><text x="1434" y="900.5">Master</text>
</g>
<!-- meters -->
<g>
<rect x="1517" y="90" width="13" height="78" fill="#2a2a2a"/><rect x="1517" y="170" width="13" height="19" fill="#2a2a2a"/><rect x="1517" y="191" width="13" height="19" fill="#2a2a2a"/><rect x="1517" y="212" width="13" height="19" fill="#2a2a2a"/><rect x="1517" y="233" width="13" height="19" fill="#2a2a2a"/><rect x="1517" y="254" width="13" height="59" fill="#2a2a2a"/><rect x="1517" y="315" width="13" height="59" fill="#2a2a2a"/><rect x="1517" y="376" width="13" height="58" fill="#2a2a2a"/><rect x="1517" y="436" width="13" height="19" fill="#2a2a2a"/><rect x="1517" y="457" width="13" height="19" fill="#2a2a2a"/><rect x="1517" y="478" width="13" height="19" fill="#2a2a2a"/><rect x="1517" y="499" width="13" height="19" fill="#2a2a2a"/><rect x="1517" y="520" width="13" height="19" fill="#2a2a2a"/><rect x="1517" y="541" width="13" height="20" fill="#2a2a2a"/><rect x="1517" y="563" width="13" height="58" fill="#2a2a2a"/><rect x="1517" y="623" width="13" height="97" fill="#2a2a2a"/><rect x="1517" y="722" width="13" height="19" fill="#2a2a2a"/><rect x="1517" y="743" width="13" height="19" fill="#2a2a2a"/><rect x="1517" y="764" width="13" height="58" fill="#2a2a2a"/><rect x="1517" y="824" width="13" height="19" fill="#2a2a2a"/><rect x="1517" y="845" width="13" height="19" fill="#2a2a2a"/><rect x="1517" y="866" width="13" height="19" fill="#2a2a2a"/><rect x="1517" y="887" width="13" height="19" fill="#2a2a2a"/>
</g>
<g fill="#000">
<rect x="1520" y="92" width="3.5" height="75"/><rect x="1525" y="92" width="3.5" height="75"/>
<rect x="1520" y="172" width="3.5" height="16"/><rect x="1525" y="172" width="3.5" height="16"/><rect x="1520" y="193" width="3.5" height="16"/><rect x="1525" y="193" width="3.5" height="16"/><rect x="1520" y="214" width="3.5" height="16"/><rect x="1525" y="214" width="3.5" height="16"/><rect x="1520" y="235" width="3.5" height="16"/><rect x="1525" y="235" width="3.5" height="16"/>
<rect x="1520" y="256" width="3.5" height="56"/><rect x="1525" y="256" width="3.5" height="56"/><rect x="1520" y="317" width="3.5" height="56"/><rect x="1525" y="317" width="3.5" height="56"/><rect x="1520" y="378" width="3.5" height="55"/><rect x="1525" y="378" width="3.5" height="55"/>
<rect x="1520" y="438" width="3.5" height="16"/><rect x="1525" y="438" width="3.5" height="16"/><rect x="1520" y="459" width="3.5" height="16"/><rect x="1525" y="459" width="3.5" height="16"/><rect x="1520" y="480" width="3.5" height="16"/><rect x="1525" y="480" width="3.5" height="16"/><rect x="1520" y="501" width="3.5" height="16"/><rect x="1525" y="501" width="3.5" height="16"/><rect x="1520" y="522" width="3.5" height="16"/><rect x="1525" y="522" width="3.5" height="16"/><rect x="1520" y="543" width="3.5" height="17"/><rect x="1525" y="543" width="3.5" height="17"/>
<rect x="1520" y="565" width="3.5" height="55"/><rect x="1525" y="565" width="3.5" height="55"/><rect x="1520" y="625" width="3.5" height="94"/><rect x="1525" y="625" width="3.5" height="94"/>
<rect x="1520" y="724" width="3.5" height="16"/><rect x="1525" y="724" width="3.5" height="16"/><rect x="1520" y="745" width="3.5" height="16"/><rect x="1525" y="745" width="3.5" height="16"/><rect x="1520" y="766" width="3.5" height="55"/><rect x="1525" y="766" width="3.5" height="55"/>
<rect x="1520" y="826" width="3.5" height="16"/><rect x="1525" y="826" width="3.5" height="16"/><rect x="1520" y="847" width="3.5" height="16"/><rect x="1525" y="847" width="3.5" height="16"/><rect x="1520" y="868" width="3.5" height="16"/><rect x="1525" y="868" width="3.5" height="16"/><rect x="1520" y="889" width="3.5" height="16"/><rect x="1525" y="889" width="3.5" height="16"/>
</g>
</svg>
</body></html>
